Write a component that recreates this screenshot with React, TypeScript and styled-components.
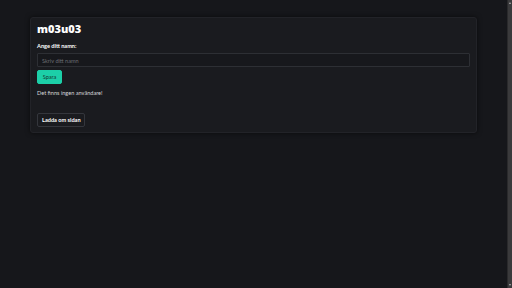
import React from "react";
import styled, { createGlobalStyle } from "styled-components";

const Global = createGlobalStyle`
  html { background: #16171b; }
  body {
    margin: 0;
    background: #16171b;
    font-family: "Lato", "Liberation Sans", sans-serif;
    color: #e6e6e6;
  }
`;

const Window = styled.div`
  display: flex;
  min-height: 288px;
`;

const Page = styled.main`
  flex: 1;
  padding: 17px 30px;
`;

const Scrollbar = styled.div`
  flex: 0 0 5px;
  width: 5px;
  min-height: 288px;
  background: #3a3a3c;
  border-left: 1px solid #2a2a2c;
  display: flex;
  flex-direction: column;
  justify-content: space-between;
  align-items: center;
  padding: 2px 0;
  box-sizing: border-box;
`;

const Arrow = styled.span<{ $down?: boolean }>`
  display: block;
  width: 0;
  height: 0;
  border-left: 1.5px solid transparent;
  border-right: 1.5px solid transparent;
  ${(p) =>
    p.$down
      ? "border-top: 2px solid #b0b0b0;"
      : "border-bottom: 2px solid #b0b0b0;"}
`;

const Card = styled.section`
  background: #1a1b1f;
  border: 1px solid #222328;
  border-radius: 3px;
  box-shadow: 0 0 5px rgba(0, 0, 0, 0.6);
  padding: 5px 6px 5px;
  display: flex;
  flex-direction: column;
  align-items: flex-start;
`;

const Title = styled.h1`
  margin: 0;
  font-family: "Open Sans", "Lato", sans-serif;
  font-size: 11px;
  font-weight: 800;
  color: #ffffff;
  line-height: 12px;
`;

const Label = styled.label`
  margin-top: 7px;
  font-size: 5.6px;
  font-weight: 700;
  color: #ffffff;
  line-height: 8px;
`;

const Input = styled.input`
  box-sizing: border-box;
  margin: 3px 0 0;
  width: 100%;
  height: 14px;
  background: #17181c;
  border: 1px solid #2d2f34;
  border-radius: 1px;
  padding: 0 4px;
  font-family: inherit;
  font-size: 5.6px;
  color: #ddd;
  outline: none;
  &::placeholder { color: #6b6d73; }
`;

const Button = styled.button<{ $primary?: boolean }>`
  box-sizing: border-box;
  height: 14px;
  margin: 0;
  padding: 0 4px;
  border-radius: 2px;
  font-family: inherit;
  font-size: 5.6px;
  line-height: 12px;
  white-space: nowrap;
  cursor: pointer;
  background: ${(p) => (p.$primary ? "#1ccfa8" : "#1a1b1f")};
  color: ${(p) => (p.$primary ? "#133a33" : "#ffffff")};
  font-weight: ${(p) => (p.$primary ? 400 : 700)};
  border: 1px solid ${(p) => (p.$primary ? "#1ccfa8" : "#34363c")};
`;

const SaveButton = styled(Button)`
  margin-top: 3px;
  width: 25px;
`;

const Message = styled.p`
  margin: 5px 0 0;
  font-size: 5.6px;
  line-height: 8px;
  color: #d6d6d6;
`;

const ReloadButton = styled(Button)`
  margin-top: 16px;
  width: 48px;
`;

export default function App() {
  return (
    <>
      <Global />
      <Window>
        <Page>
          <Card>
            <Title>m03u03</Title>
            <Label htmlFor="name">Ange ditt namn:</Label>
            <Input id="name" placeholder="Skriv ditt namn" />
            <SaveButton $primary>Spara</SaveButton>
            <Message>Det finns ingen användare!</Message>
            <ReloadButton>Ladda om sidan</ReloadButton>
          </Card>
        </Page>
        <Scrollbar aria-hidden="true">
          <Arrow />
          <Arrow $down />
        </Scrollbar>
      </Window>
    </>
  );
}
